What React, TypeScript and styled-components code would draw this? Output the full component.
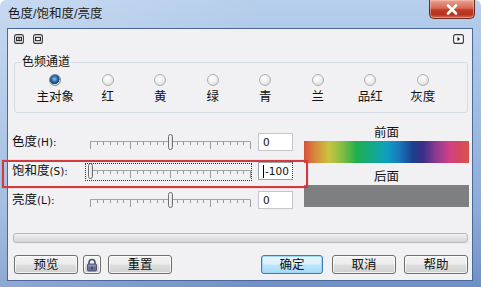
import React from 'react';
import styled, { createGlobalStyle, css } from 'styled-components';

const GlobalStyle = createGlobalStyle`
    html, body {
        margin: 0;
        padding: 0;
        background: #ffffff;
    }
    body {
        font-family: 'Liberation Sans', 'Noto Sans CJK SC', sans-serif;
        font-size: 12px;
        color: #111;
    }
`;

const CJK = `'Liberation Sans', 'Noto Sans CJK SC', sans-serif`;

// 窗口外框
const Window = styled.div`
    width: 481px;
    height: 287px;
    display: flex;
    flex-direction: column;
    box-sizing: border-box;
    border-radius: 6px 6px 0 0;
    background: linear-gradient(90deg, rgba(255, 255, 255, 0.22), rgba(255, 255, 255, 0) 55%),
        linear-gradient(180deg, #b7cfec 0%, #a4c0e5 30%, #8aaad8 75%, #6e90c4 100%);
    overflow: visible;
`;

const TitleBar = styled.div`
    height: 28px;
    flex: none;
    display: flex;
    justify-content: space-between;
    align-items: flex-start;
`;

const TitleText = styled.div`
    padding: 6px 0 0 8px;
    font-family: ${CJK};
    font-size: 12.5px;
    line-height: 16px;
    color: #1b1b1b;
`;

const CloseButton = styled.div`
    width: 46px;
    height: 19px;
    margin-right: 6px;
    box-sizing: border-box;
    border: 1px solid #6a2a22;
    border-top: none;
    border-radius: 0 0 5px 5px;
    display: flex;
    align-items: center;
    justify-content: center;
    background: linear-gradient(180deg, #e7a391 0%, #d66a55 45%, #c13c26 55%, #b5321d 80%, #d26a50 100%);
    box-shadow: inset 0 0 0 1px rgba(255, 210, 200, 0.45);
`;

// 客户区
const Client = styled.div`
    flex: 1;
    margin: 0 8px 6px 7px;
    border: 1px solid #4a689a;
    background: #f1f0f2;
    display: flex;
    flex-direction: column;
    position: relative;
`;

const Toolbar = styled.div`
    height: 10px;
    margin-top: 4px;
    padding: 0 9px 0 6px;
    display: flex;
    align-items: center;
    gap: 9px;
`;

const ToolIcon = styled.span<{ $right?: boolean }>`
    display: block;
    width: 10px;
    height: 10px;
    ${(p) =>
        p.$right &&
        css`
            margin-left: auto;
        `}
`;

// 分组框
const GroupBox = styled.fieldset`
    margin: 11px 4px 0 6px;
    padding: 0;
    border: 1px solid #d5dde3;
    border-radius: 3px;
    min-width: 0;
`;

const Legend = styled.legend`
    margin-left: 6px;
    padding: 0 1px;
    font-family: ${CJK};
    font-size: 12px;
    line-height: 16px;
    color: #111;
`;

const RadioGrid = styled.div`
    margin-left: 14px;
    padding: 4px 0 8px;
    display: grid;
    grid-template-columns: repeat(8, 52.5px);
`;

const RadioItem = styled.label`
    display: flex;
    flex-direction: column;
    align-items: center;
    gap: 4px;
    font-family: ${CJK};
    font-size: 12.5px;
    line-height: 14px;
`;

const RadioDot = styled.span<{ $checked?: boolean }>`
    width: 12px;
    height: 12px;
    box-sizing: border-box;
    border-radius: 50%;
    border: 1px solid #aeb0b3;
    background: radial-gradient(circle at 40% 35%, #ffffff 0%, #f0f0f0 45%, #cfd1d4 100%);
    ${(p) =>
        p.$checked &&
        css`
            border-color: #7b8796;
            background: radial-gradient(circle at 45% 40%, #8cc0ec 0%, #2d6fae 35%, #123f72 60%, #dfe3e7 64%, #c3c8cd 100%);
        `}
`;

// 滑块区域
const SliderArea = styled.div`
    margin-top: 13px;
    display: flex;
    gap: 11px;
    position: relative;
`;

const SliderGrid = styled.div`
    padding-top: 2px;
    display: grid;
    grid-template-columns: 72px 166px 35px;
    grid-auto-rows: 28px;
    column-gap: 6px;
    row-gap: 1px;
    align-items: center;
`;

const RowLabel = styled.div`
    padding-left: 4px;
    font-family: ${CJK};
    font-size: 12.5px;
    line-height: 14px;
    white-space: nowrap;
`;

const LatinPart = styled.span`
    font-family: 'DejaVu Sans', 'Liberation Sans', sans-serif;
    font-size: 10.5px;
`;

const SliderCell = styled.div<{ $focused?: boolean }>`
    position: relative;
    height: 28px;
    ${(p) =>
        p.$focused &&
        css`
            &::after {
                content: '';
                position: absolute;
                left: -1px;
                right: 0;
                top: 6px;
                bottom: 4px;
                border: 1px dotted #333;
            }
        `}
`;

const Track = styled.svg`
    position: absolute;
    left: 0;
    top: 0;
`;

const Thumb = styled.span`
    position: absolute;
    top: 6px;
    width: 5px;
    height: 16px;
    box-sizing: border-box;
    border: 1px solid #6f6f6f;
    border-radius: 3px;
    background: linear-gradient(90deg, #fafafa, #dcdcdc);
`;

const ValueBox = styled.div<{ $focused?: boolean }>`
    height: 18px;
    box-sizing: border-box;
    border: 1px solid #c3c6ca;
    background: #fff;
    padding-left: 4px;
    font-family: 'DejaVu Sans', 'Liberation Sans', sans-serif;
    font-size: 10.5px;
    line-height: 16px;
    display: flex;
    align-items: center;
    ${(p) =>
        p.$focused &&
        css`
            border-color: #9ba4ae;
            border-right: 1px dotted #333;
        `}
`;

const Caret = styled.span`
    display: inline-block;
    width: 1px;
    height: 13px;
    background: #000;
    margin-right: 1px;
`;

const Preview = styled.div`
    width: 165px;
    display: flex;
    flex-direction: column;
`;

const PreviewLabel = styled.div`
    font-family: ${CJK};
    font-size: 12.5px;
    line-height: 14px;
    text-align: center;
    margin-bottom: 1px;
`;

const ColorBar = styled.div<{ $kind: 'spectrum' | 'solid' }>`
    height: 22px;
    margin-bottom: 7px;
    background: ${(p) =>
        p.$kind === 'spectrum'
            ? 'linear-gradient(90deg, #d9503c 0%, #d98a3c 7%, #c9c43e 15%, #7cbb44 24%, #1db04e 32%, #12a88a 42%, #10a0c2 50%, #1877bd 58%, #1c3f8c 66%, #3b2f86 72%, #8c3a92 80%, #cf4184 88%, #d6485e 95%, #d85348 100%)'
            : '#7e7f81'};
`;

// 红色标注框
const Highlight = styled.div`
    position: absolute;
    left: -6px;
    top: 34px;
    width: 306px;
    height: 28px;
    box-sizing: border-box;
    border: 2px solid #d23a3e;
    box-shadow: 0 0 1px rgba(210, 58, 62, 0.6);
    pointer-events: none;
`;

const Progress = styled.div`
    margin: 19px 4px 0 5px;
    height: 10px;
    box-sizing: border-box;
    border: 1px solid #b9b9b9;
    border-radius: 3px;
    background: linear-gradient(180deg, #f2f2f2 0%, #e3e3e3 50%, #d6d6d6 100%);
`;

const ButtonRow = styled.div`
    margin-top: 12px;
    padding: 0 4px 0 6px;
    display: flex;
    align-items: center;
`;

const Button = styled.button<{ $w: number; $gap?: number; $default?: boolean; $push?: boolean }>`
    width: ${(p) => p.$w}px;
    height: 19px;
    margin: 0 0 0 ${(p) => (p.$push ? 'auto' : `${p.$gap ?? 0}px`)};
    padding: 0;
    box-sizing: border-box;
    border: 1px solid #707070;
    border-radius: 3px;
    font-family: ${CJK};
    font-size: 12.5px;
    line-height: 16px;
    color: #111;
    display: flex;
    align-items: center;
    justify-content: center;
    background: linear-gradient(180deg, #f4f4f4 0%, #ececec 48%, #dedede 52%, #d0d0d0 100%);
    box-shadow: inset 0 0 0 1px rgba(255, 255, 255, 0.7);
    ${(p) =>
        p.$default &&
        css`
            border-color: #3c7fb1;
            background: linear-gradient(180deg, #eaf6fd 0%, #d9f0fc 48%, #bee6fd 52%, #a7d9f5 100%);
            box-shadow: inset 0 0 0 1px #9fd6f3;
        `}
`;

const LockButton = styled(Button)`
    padding: 0;
`;

const CloseGlyph = () => (
    <svg width="14" height="11" viewBox="0 0 14 11">
        <path d="M3 1.5 L11 9.5 M11 1.5 L3 9.5" stroke="#fff" strokeWidth="2.6" strokeLinecap="round" />
    </svg>
);

const SplitIcon = () => (
    <svg width="10" height="10" viewBox="0 0 10 10">
        <rect x="0.6" y="0.6" width="8.8" height="8.8" rx="2" fill="#f6f6f6" stroke="#3a3a3a" strokeWidth="1.1" />
        <rect x="2.6" y="3.3" width="4.8" height="3.4" fill="none" stroke="#111" strokeWidth="1" />
        <line x1="5" y1="3.3" x2="5" y2="6.7" stroke="#111" strokeWidth="1" />
    </svg>
);

const SingleIcon = () => (
    <svg width="10" height="10" viewBox="0 0 10 10">
        <rect x="0.6" y="0.6" width="8.8" height="8.8" rx="2" fill="#f6f6f6" stroke="#3a3a3a" strokeWidth="1.1" />
        <rect x="2.6" y="3.3" width="4.8" height="3.4" fill="none" stroke="#111" strokeWidth="1" />
    </svg>
);

const ArrowIcon = () => (
    <svg width="11" height="10" viewBox="0 0 11 10">
        <rect x="0.6" y="0.6" width="9.8" height="8.8" rx="2" fill="#f6f6f6" stroke="#3a3a3a" strokeWidth="1.1" />
        <path d="M4.5 2.8 L7 5 L4.5 7.2 Z" fill="#111" />
    </svg>
);

const LockIcon = () => (
    <svg width="12" height="14" viewBox="0 0 12 14">
        <path d="M3 6.5 V4.5 a3 3 0 0 1 6 0 V6.5" fill="none" stroke="#4c5070" strokeWidth="1.6" />
        <rect x="1.5" y="6" width="9" height="7" rx="1" fill="#6a6f98" stroke="#3c3f5c" strokeWidth="0.8" />
        <rect x="2.3" y="6.6" width="7.4" height="2" fill="#9aa0c6" opacity="0.7" />
        <rect x="5.4" y="8.8" width="1.2" height="2.6" fill="#2b2d44" />
    </svg>
);

// 刻度：共 24 格，每 6 格一条长刻度
const SliderTicks = () => {
    const ticks = Array.from({ length: 25 }, (_, i) => i);
    return (
        <Track width="166" height="28" viewBox="0 0 166 28">
            <line x1="4" y1="13.5" x2="164" y2="13.5" stroke="#a4a4a4" strokeWidth="1" />
            {ticks.map((i) => {
                const x = Math.round(4 + (160 * i) / 24) + 0.5;
                const long = i % 6 === 0;
                return <line key={i} x1={x} y1={13.5} x2={x} y2={long ? 21 : 17} stroke="#9a9a9a" strokeWidth="1" />;
            })}
        </Track>
    );
};

const channels = [
    { key: 'master', label: '主对象' },
    { key: 'red', label: '红' },
    { key: 'yellow', label: '黄' },
    { key: 'green', label: '绿' },
    { key: 'cyan', label: '青' },
    { key: 'blue', label: '兰' },
    { key: 'magenta', label: '品红' },
    { key: 'gray', label: '灰度' },
];

const sliders = [
    { key: 'h', cn: '色度', en: '(H):', value: '0', pos: 0.5 },
    { key: 's', cn: '饱和度', en: '(S):', value: '-100', pos: 0, focused: true },
    { key: 'l', cn: '亮度', en: '(L):', value: '0', pos: 0.5 },
];

/**
 * 对话框：色度/饱和度/亮度
 */
const App = () => {
    return (
        <>
            <GlobalStyle />
            <Window>
                <TitleBar>
                    <TitleText>色度/饱和度/亮度</TitleText>
                    <CloseButton>
                        <CloseGlyph />
                    </CloseButton>
                </TitleBar>
                <Client>
                    {/* 工具条 */}
                    <Toolbar>
                        <ToolIcon>
                            <SplitIcon />
                        </ToolIcon>
                        <ToolIcon>
                            <SingleIcon />
                        </ToolIcon>
                        <ToolIcon $right>
                            <ArrowIcon />
                        </ToolIcon>
                    </Toolbar>

                    {/* 色频通道 */}
                    <GroupBox>
                        <Legend>色频通道</Legend>
                        <RadioGrid>
                            {channels.map((c, i) => (
                                <RadioItem key={c.key}>
                                    <RadioDot $checked={i === 0} />
                                    <span>{c.label}</span>
                                </RadioItem>
                            ))}
                        </RadioGrid>
                    </GroupBox>

                    {/* 滑块 + 预览 */}
                    <SliderArea>
                        <SliderGrid>
                            {sliders.map((s) => (
                                <React.Fragment key={s.key}>
                                    <RowLabel>
                                        {s.cn}
                                        <LatinPart>{s.en}</LatinPart>
                                    </RowLabel>
                                    <SliderCell $focused={s.focused}>
                                        <SliderTicks />
                                        <Thumb style={{ left: 4 + 160 * s.pos - 2 }} />
                                    </SliderCell>
                                    <ValueBox $focused={s.focused}>
                                        {s.focused && <Caret />}
                                        {s.value}
                                    </ValueBox>
                                </React.Fragment>
                            ))}
                        </SliderGrid>
                        <Preview>
                            <PreviewLabel>前面</PreviewLabel>
                            <ColorBar $kind="spectrum" />
                            <PreviewLabel>后面</PreviewLabel>
                            <ColorBar $kind="solid" />
                        </Preview>
                        <Highlight />
                    </SliderArea>

                    <Progress />

                    {/* 按钮 */}
                    <ButtonRow>
                        <Button $w={64}>预览</Button>
                        <LockButton $w={18} $gap={5}>
                            <LockIcon />
                        </LockButton>
                        <Button $w={64} $gap={7}>
                            重置
                        </Button>
                        <Button $w={62} $push $default>
                            确定
                        </Button>
                        <Button $w={64} $gap={9}>
                            取消
                        </Button>
                        <Button $w={64} $gap={8}>
                            帮助
                        </Button>
                    </ButtonRow>
                </Client>
            </Window>
        </>
    );
};

export default App;
